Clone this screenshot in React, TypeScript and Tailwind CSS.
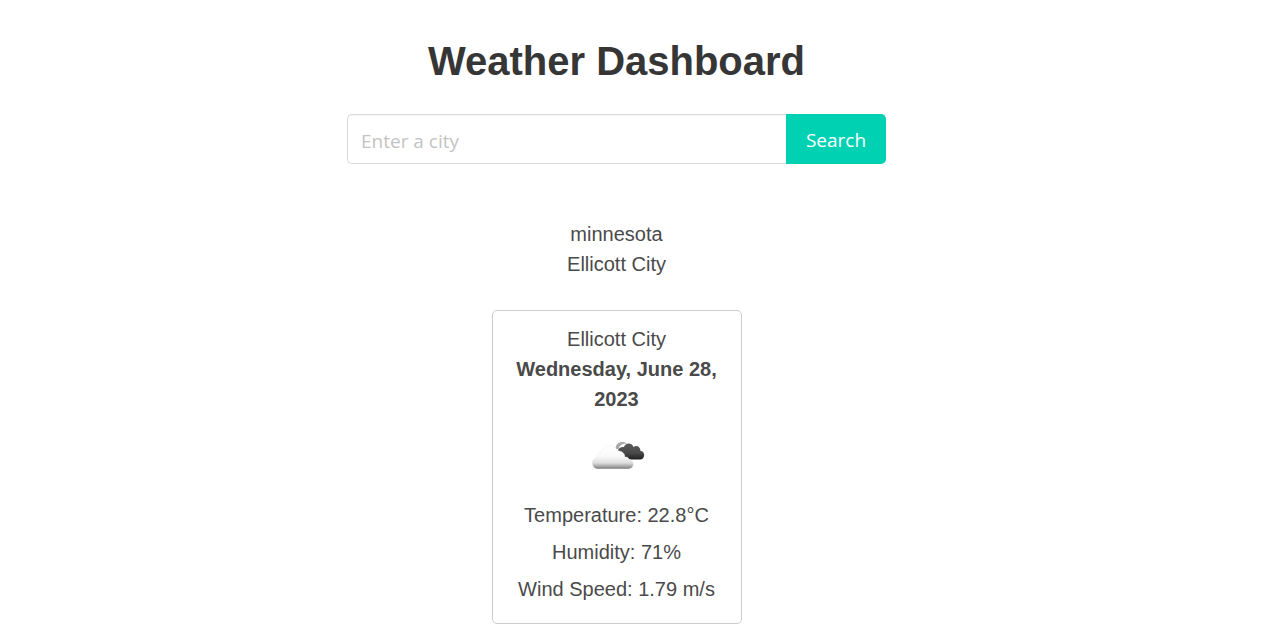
import { useState, type FormEvent } from "react";

function CloudIcon() {
  return (
    <svg viewBox="0 0 62 62" className="size-[62px]" role="img" aria-label="Broken clouds">
      <defs>
        <linearGradient id="front" x1="0" y1="0" x2="0" y2="1">
          <stop offset="0" stopColor="#ffffff" />
          <stop offset="0.45" stopColor="#fafafa" />
          <stop offset="0.74" stopColor="#dedede" />
          <stop offset="0.88" stopColor="#aaaaaa" />
          <stop offset="1" stopColor="#747474" />
        </linearGradient>
        <linearGradient id="back" x1="0" y1="0" x2="0" y2="1">
          <stop offset="0" stopColor="#5c5c5c" />
          <stop offset="0.6" stopColor="#484848" />
          <stop offset="1" stopColor="#202020" />
        </linearGradient>
      </defs>
      <path
        d="M32 24.5C32.5 22 35 20.5 38 21C39 16.5 46 16 47.5 21C51 18.5 54.5 21 54.5 25C59.5 25 59.5 33.5 54 33.5H40L38 29Z"
        fill="url(#back)"
      />
      <path d="M29.5 23C29.5 16.5 37 14 41 18C37 17 33.5 19 32.5 23Z" fill="#a8a8a8" />
      <path
        d="M12 43C4.500 43 4.500 32 11 31.500C10 28 12.500 25.500 15.500 26C17.500 17.500 29 17 31 25C36 24.500 39.500 28 38.500 31.500C41 30.500 42.500 31.500 43 33.500C49 33.500 49 43 42.500 43Z"
        fill="url(#front)"
        stroke="#f0f0f0"
        strokeWidth="0.6"
      />
    </svg>
  );
}

const history = ["minnesota", "Ellicott City"];
const readings = ["Temperature: 22.8°C", "Humidity: 71%", "Wind Speed: 1.79 m/s"];

export default function App() {
  const [city, setCity] = useState("");

  return (
    <main className="flex flex-col items-center bg-white pt-[39px] pr-[33px] pb-5 font-['Liberation_Sans',sans-serif] text-xl leading-[30px] text-[#4a4a4a]">
      <h1 className="text-[40px] leading-[45px] font-bold tracking-normal text-[#363636]">Weather Dashboard</h1>

      <form
        className="mt-[30px] flex h-[50px] w-full max-w-[539px] font-['Open_Sans',sans-serif] text-[19px]"
        onSubmit={(event: FormEvent) => event.preventDefault()}
      >
        <input
          type="text"
          aria-label="City"
          placeholder="Enter a city"
          value={city}
          onChange={(event) => setCity(event.target.value)}
          className="min-w-0 flex-1 rounded-l-[5px] border border-r-0 border-[#dbdbdb] bg-white px-[13px] pt-1 text-[#363636] shadow-[inset_0_1px_2px_rgba(10,10,10,0.05)] outline-none placeholder:text-[#c3c3c3]"
        />
        <button type="submit" className="w-[100px] rounded-r-[5px] bg-[#00d1b2] pt-0.5 text-white">
          Search
        </button>
      </form>

      <ul className="mt-[55px] text-center">
        {history.map((name) => (
          <li key={name}>{name}</li>
        ))}
      </ul>

      <section className="mt-[31px] flex w-[250px] flex-col items-center rounded-[5px] border border-[#cccccc] px-[19px] pt-[13px] pb-[19px] text-center">
        <h2>Ellicott City</h2>
        <p className="font-bold">Wednesday, June 28, 2023</p>
        <div className="my-3">
          <CloudIcon />
        </div>
        <div className="flex flex-col gap-[7px]">
          {readings.map((reading) => (
            <p key={reading}>{reading}</p>
          ))}
        </div>
      </section>
    </main>
  );
}
